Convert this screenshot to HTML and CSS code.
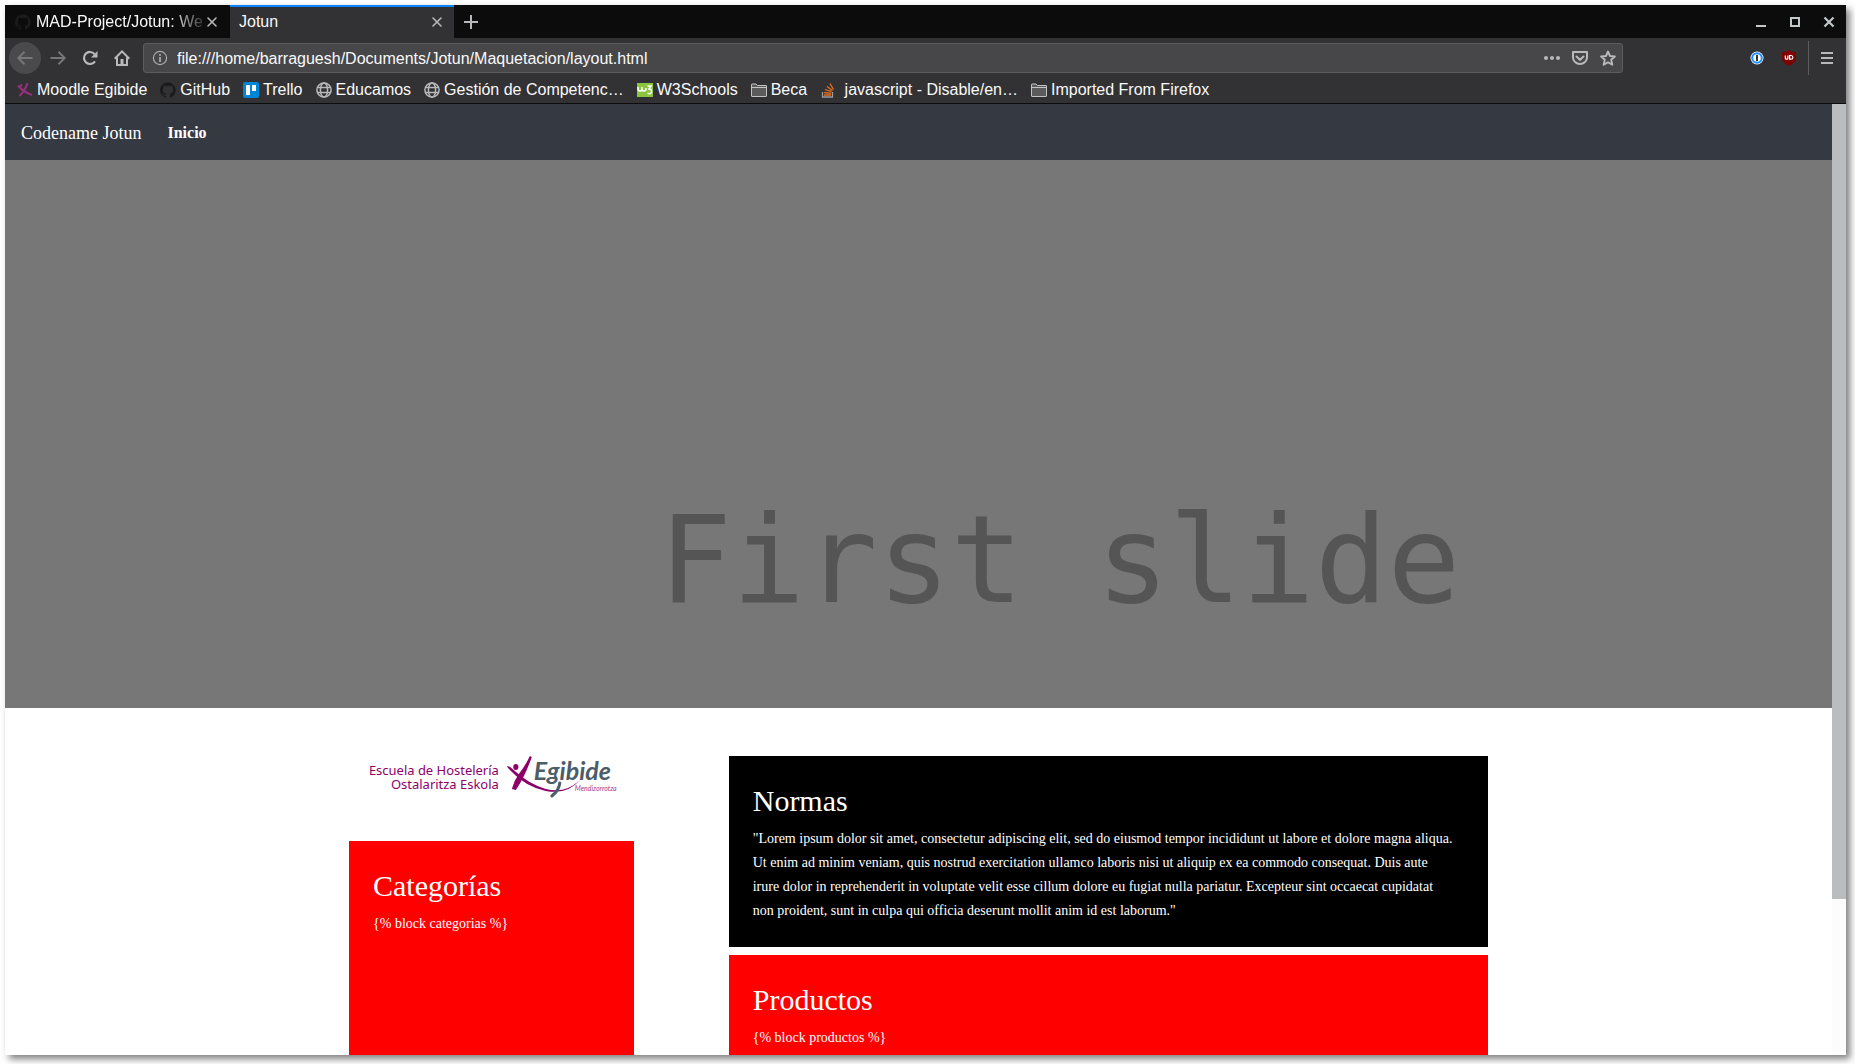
FILE: index.html
```html
<!DOCTYPE html>
<html lang="es">
<head>
<meta charset="utf-8">
<title>Jotun</title>
<link rel="stylesheet" href="styles.css">
</head>
<body>
<svg class="defs" width="0" height="0" aria-hidden="true">
  <defs>
    <symbol id="close" viewBox="0 0 16 16"><path d="M4 4l8 8M12 4l-8 8" fill="none" stroke="currentColor" stroke-width="1.6" stroke-linecap="round"/></symbol>
    <symbol id="cat" viewBox="0 0 16 16"><path fill="#1b1b1c" d="M8 .2a8 8 0 0 0-2.5 15.6c.4.1.5-.2.5-.4v-1.500c-2.200.5-2.700-.9-2.700-.9-.4-.9-.9-1.200-.9-1.200-.7-.5.1-.5.1-.5.8.1 1.200.8 1.200.8.7 1.200 1.900.9 2.300.7.1-.5.300-.9.5-1.100-1.800-.2-3.600-.9-3.600-4 0-.9.300-1.600.8-2.100-.1-.2-.4-1 .1-2.100 0 0 .7-.2 2.200.8a7.500 7.500 0 0 1 4 0c1.500-1 2.200-.8 2.200-.8.4 1.100.2 1.900.1 2.100.5.6.8 1.300.8 2.100 0 3.100-1.900 3.700-3.700 3.900.3.300.6.8.6 1.500v2.200c0 .2.1.5.5.4A8 8 0 0 0 8 .2z"/></symbol>
    <symbol id="globe" viewBox="0 0 16 16"><g fill="none" stroke="#b9b9bb" stroke-width="1.500"><circle cx="8" cy="8" r="7.100"/><ellipse cx="8" cy="8" rx="3.600" ry="7.100"/><path d="M1.500 5.500h13M1.500 10.500h13" stroke-width="1.500"/></g></symbol>
    <symbol id="folder" viewBox="0 0 16 16"><path d="M.5 14V2.500q0-.5.5-.5h4l1.500 1.500H15q.5 0 .5.5v10q0 .5-.5.5H1q-.5 0-.5-.5z" fill="#5b5b5c" stroke="#c3c3c4"/><path d="M1 5.500h14" stroke="#c3c3c4"/></symbol>
  </defs>
</svg>
<div class="window">
  <div class="tabbar">
    <div class="tab">
      <svg class="icon"><use href="#cat"/></svg>
      <span class="tab-label tab-fade">MAD-Project/Jotun: Web</span>
      <button class="plain" aria-label="Cerrar pestaña"><svg class="icon"><use href="#close"/></svg></button>
    </div>
    <div class="tab tab-active">
      <span class="tab-label">Jotun</span>
      <button class="plain" aria-label="Cerrar pestaña"><svg class="icon"><use href="#close"/></svg></button>
    </div>
    <button class="plain new-tab" aria-label="Nueva pestaña"><svg class="icon" viewBox="0 0 16 16"><path d="M8 1v14M1 8h14" stroke="currentColor" stroke-width="2"/></svg></button>
    <div class="window-controls">
      <button class="plain" aria-label="Minimizar"><svg class="icon" viewBox="0 0 16 16"><path d="M3 12h10" stroke="currentColor" stroke-width="2"/></svg></button>
      <button class="plain" aria-label="Maximizar"><svg class="icon" viewBox="0 0 16 16"><path d="M4 4h8v8H4z" fill="none" stroke="currentColor" stroke-width="2"/></svg></button>
      <button class="plain" aria-label="Cerrar"><svg class="icon" viewBox="0 0 16 16"><path d="M3.500 3.500l9 9M12.500 3.500l-9 9" stroke="currentColor" stroke-width="2.200"/></svg></button>
    </div>
  </div>

  <div class="toolbar">
    <div class="nav-buttons">
      <button class="plain round dim" aria-label="Atrás"><svg class="icon" viewBox="0 0 16 16"><path d="M15.500 8H1.500M7.500 1.800L1.300 8l6.200 6.200" fill="none" stroke="currentColor" stroke-width="2"/></svg></button>
      <button class="plain dim" aria-label="Adelante"><svg class="icon" viewBox="0 0 16 16"><path d="M.5 8h14M8.500 1.800L14.700 8l-6.200 6.200" fill="none" stroke="currentColor" stroke-width="2"/></svg></button>
      <button class="plain" aria-label="Recargar"><svg class="icon" viewBox="0 0 16 16"><path d="M13 11.300A6 6 0 1 1 12.500 4" fill="none" stroke="currentColor" stroke-width="2.200"/><path d="M15.500 1v6.500H9z" fill="currentColor"/></svg></button>
      <button class="plain" aria-label="Inicio"><svg class="icon" viewBox="0 0 16 16"><path d="M.7 8.700L8 1.400l7.300 7.300M3 7.500V15h10V7.500" fill="none" stroke="currentColor" stroke-width="2"/><path d="M6.500 15V9h3v6z" fill="currentColor"/></svg></button>
    </div>
    <div class="urlbar">
      <svg class="icon" viewBox="0 0 16 16"><circle cx="8" cy="8" r="6.600" fill="none" stroke="currentColor" stroke-width="1.200"/><path d="M8 7v5M8 4v1.800" stroke="currentColor" stroke-width="1.800"/></svg>
      <input class="url" type="text" aria-label="Dirección" value="file:///home/barraguesh/Documents/Jotun/Maquetacion/layout.html">
      <button class="plain" aria-label="Acciones"><svg class="icon" viewBox="0 0 16 16" fill="currentColor"><circle cx="2" cy="8" r="2"/><circle cx="8" cy="8" r="2"/><circle cx="14" cy="8" r="2"/></svg></button>
      <button class="plain" aria-label="Pocket"><svg class="icon" viewBox="0 0 16 16" fill="none" stroke="currentColor" stroke-width="2"><path d="M1 2h14v5.500a7 6.500 0 0 1-14 0z" stroke-linejoin="round"/><path d="M4.500 6.500L8 9.800l3.500-3.300" stroke-linecap="round"/></svg></button>
      <button class="plain" aria-label="Marcador"><svg class="icon" viewBox="0 0 16 16"><path d="M8 1.500l2 4.500 4.900.5-3.700 3.300 1.100 4.900L8 12.200l-4.300 2.500 1.100-4.900L1.100 6.500 6 6z" fill="none" stroke="currentColor" stroke-width="1.900" stroke-linejoin="round"/></svg></button>
    </div>
    <div class="extensions">
      <button class="plain" aria-label="Contraseñas"><svg class="icon" viewBox="0 0 16 16"><circle cx="8" cy="8" r="6.500" fill="#fff"/><circle cx="8" cy="8" r="4.800" fill="#fff" stroke="#1a8cff" stroke-width="2"/><path d="M8 5v6" stroke="#333" stroke-width="2"/></svg></button>
      <button class="plain" aria-label="Bloqueador"><svg class="icon" viewBox="0 0 16 16"><path d="M8 .3Q11 2.300 15 2.300v5.500q0 5-7 8-7-3-7-8V2.300Q5 2.300 8 .3z" fill="#800000"/><path d="M4.300 5.500v2.700q0 1 1 1h.6q1 0 1-1V5.500M8.600 5.500v3.700h1.500q1.800 0 1.800-1.800t-1.800-1.900z" fill="none" stroke="#fff" stroke-width="1.200"/></svg></button>
    </div>
    <button class="plain menu" aria-label="Menú"><svg class="icon" viewBox="0 0 16 16"><path d="M2 3h12M2 8h12M2 13h12" stroke="currentColor" stroke-width="2"/></svg></button>
  </div>

  <nav class="bookmarks" aria-label="Marcadores">
    <a href="#"><svg class="icon" viewBox="0 0 16 16"><path d="M10.500 1q-2 7-8 13M1 3.500q6 7 14 9.500" fill="none" stroke="#96307f" stroke-width="2"/><circle cx="4" cy="3.500" r="1.300" fill="#96307f"/></svg>Moodle Egibide</a>
    <a href="#"><svg class="icon"><use href="#cat"/></svg>GitHub</a>
    <a href="#"><svg class="icon" viewBox="0 0 16 16"><rect width="16" height="16" rx="2" fill="#0086d6"/><rect x="3" y="3" width="4" height="10" rx=".6" fill="#fff"/><rect x="9" y="3" width="4" height="6" rx=".6" fill="#fff"/></svg>Trello</a>
    <a href="#"><svg class="icon"><use href="#globe"/></svg>Educamos</a>
    <a href="#"><svg class="icon"><use href="#globe"/></svg>Gestión de Competenc…</a>
    <a href="#"><svg class="icon" viewBox="0 0 16 16"><path d="M0 1h16v14H0z" fill="#8bc53f"/><path d="M1 5v2q0 2 2 2t2-2V5v2q0 2 2 2t2-2V6M10.500 4H14l-2 3q3 0 2.500 3-1 3-4 1" fill="none" stroke="#fff" stroke-width="1.500"/></svg>W3Schools</a>
    <a href="#"><svg class="icon"><use href="#folder"/></svg>Beca</a>
    <a href="#"><svg class="icon" viewBox="0 0 16 16"><path d="M2.500 10v5h10v-5" fill="none" stroke="#9a9c9f" stroke-width="1.300"/><path d="M4 13h7M4.200 10.500l7 .8M5 7.500l6.600 2.200M7 4.500l5.500 4M10 1.500l3.500 6" stroke="#e8701a" stroke-width="1.300"/></svg>&nbsp;javascript - Disable/en…</a>
    <a href="#"><svg class="icon"><use href="#folder"/></svg>Imported From Firefox</a>
  </nav>

  <div class="viewport">
    <div class="page">
      <header class="navbar">
        <a class="brand" href="#">Codename Jotun</a>
        <a class="nav-link" href="#">Inicio</a>
      </header>
      <section class="slide"><span>First slide</span></section>
      <main class="content">
        <aside>
          <svg class="logo" viewBox="0 0 285 85" role="img" aria-label="Egibide">
            <g fill="#8c0069" font-family="Noto Sans, sans-serif" font-size="13" text-anchor="end">
              <text x="150" y="19">Escuela de Hostelería</text>
              <text x="150" y="33">Ostalaritza Eskola</text>
            </g>
            <path d="M181 0l2 1q-7 20-16 33l-4-1q2-8 7-15 7-9 11-18z" fill="#8c0069"/>
            <path d="M158 10q3 0 8 5 14 13 31 18 20 5 34-9-12 15-34 11-20-4-36-21-2-2-3-4z" fill="#8c0069"/>
            <ellipse cx="167" cy="11" rx="2.600" ry="3" fill="#8c0069"/>
            <text x="185" y="24" fill="#4b5d69" font-family="Lato, sans-serif" font-size="25" font-weight="700" font-style="italic">Egibide</text>
            <path d="M211 27q-1 8-8 13" fill="none" stroke="#4b5d69" stroke-width="3" stroke-linecap="round"/>
            <text x="226" y="35" fill="#a83a8d" font-family="Lato, sans-serif" font-size="7" font-style="italic">Mendizorrotza</text>
          </svg>
          <section class="box box-red box-tall">
            <h2>Categorías</h2>
            <p>{% block categorias %}</p>
          </section>
        </aside>
        <div class="main-column">
          <section class="box box-black">
            <h2>Normas</h2>
            <p>"Lorem ipsum dolor sit amet, consectetur adipiscing elit, sed do eiusmod tempor incididunt ut labore et dolore magna aliqua. Ut enim ad minim veniam, quis nostrud exercitation ullamco laboris nisi ut aliquip ex ea commodo consequat. Duis aute<br>irure dolor in reprehenderit in voluptate velit esse cillum dolore eu fugiat nulla pariatur. Excepteur sint occaecat cupidatat<br>non proident, sunt in culpa qui officia deserunt mollit anim id est laborum."</p>
          </section>
          <section class="box box-red box-tall">
            <h2>Productos</h2>
            <p>{% block productos %}</p>
          </section>
        </div>
      </main>
    </div>
    <div class="scrollbar"><div class="thumb"></div></div>
  </div>
</div>
</body>
</html>
```
FILE: styles.css
```css
* { box-sizing: border-box; }

body {
  margin: 0;
  padding: 5px 9px 9px 5px;
  height: 100vh;
  background: #fff;
  font: 16px/24px "Liberation Sans", Arial, sans-serif;
}

.defs { position: absolute; }

.window {
  display: flex;
  flex-direction: column;
  height: 100%;
  overflow: hidden;
  background: #fff;
  box-shadow: 4px 4px 7px rgba(0, 0, 0, .5);
}

.icon { display: block; width: 16px; height: 16px; flex: none; }

.plain {
  display: flex;
  align-items: center;
  justify-content: center;
  padding: 0;
  border: 0;
  background: none;
  color: #b9b9bb;
}

/* Tabs */
.tabbar { display: flex; height: 33px; flex: none; background: #0c0c0d; }

.tab {
  display: flex;
  align-items: center;
  gap: 5px;
  width: 225px;
  padding: 0 10px;
  color: #f9f9fa;
}

.tab-active { width: 224px; padding: 0 9px 2px; background: #323234; border-top: 2px solid #0a84ff; }
.tab-label { flex: 1; overflow: hidden; white-space: nowrap; }
.tab-fade { margin-right: -3px; mask-image: linear-gradient(to right, #000 80%, rgba(0, 0, 0, .2)); }
.new-tab { width: 33px; }

.window-controls {
  display: flex;
  gap: 18px;
  margin-left: auto;
  padding-right: 9px;
}
.window-controls .plain { color: #c3c8ca; }

/* Toolbar */
.toolbar {
  display: flex;
  align-items: center;
  height: 40px;
  flex: none;
  padding: 0 2px 0 4px;
  background: #323234;
}
.nav-buttons { display: flex; }
.nav-buttons .plain { width: 32px; height: 32px; }
.nav-buttons .round { margin-right: 1px; border-radius: 50%; background: #4a4a4c; }
.nav-buttons .dim { color: #77777a; }

.urlbar {
  display: flex;
  align-items: center;
  gap: 12px;
  flex: 1;
  height: 30px;
  margin-left: 5px;
  padding: 0 6px 0 8px;
  border: 1px solid #5c5c5e;
  border-radius: 3px;
  background: #474749;
  color: #a9a9ab;
}
.url {
  flex: 1;
  min-width: 0;
  margin-left: -3px;
  padding: 1px 0 0;
  border: 0;
  background: none;
  color: #f9f9fa;
  font: inherit;
}

.extensions { display: flex; gap: 16px; padding: 0 11px 0 126px; }
.menu { width: 36px; height: 34px; border-left: 1px solid #5c5c5e; }

.bookmarks {
  display: flex;
  gap: 13px;
  height: 26px;
  flex: none;
  padding: 0 12px 2px;
  background: #323234;
  border-bottom: 1px solid #0c0c0d;
}
.bookmarks a {
  display: flex;
  align-items: center;
  gap: 4px;
  color: #f9f9fa;
  text-decoration: none;
  white-space: nowrap;
}

/* Page */
.viewport { display: flex; flex: 1; min-height: 0; }

.page {
  flex: 1;
  overflow: hidden;
  font-family: "Liberation Serif", "Times New Roman", serif;
}

.scrollbar { width: 14px; background: #fcfcfc; }
.thumb { height: 83.6%; background: #babdbf; }

.navbar {
  display: flex;
  align-items: center;
  gap: 26px;
  height: 56px;
  padding: 2px 16px 0;
  background: #353941;
}
.navbar a { color: #fff; text-decoration: none; }
.brand { font-size: 18px; }
.nav-link { font-weight: 700; }

.slide {
  display: flex;
  align-items: flex-end;
  aspect-ratio: 10 / 3;
  padding: 0 0 77px 35.8%;
  background: #777;
  color: #555;
  font: 121px/141px "DejaVu Sans Mono", monospace;
  white-space: nowrap;
}

.content {
  display: grid;
  grid-template-columns: 3fr 8fr;
  column-gap: 95px;
  max-width: 1139px;
  margin: 0 auto;
  padding-top: 48px;
}

.logo { display: block; width: 100%; }

.main-column { display: flex; flex-direction: column; gap: 8px; }

.box { padding: 24px; color: #fff; }
.box-red { background: #f00; }
.box-black { background: #000; }
.box-tall { min-height: 400px; }

h2 { margin: 0 0 6px; font-size: 30px; line-height: 41px; font-weight: 400; }
p { margin: 0; font-size: 14px; line-height: 24px; }
```
